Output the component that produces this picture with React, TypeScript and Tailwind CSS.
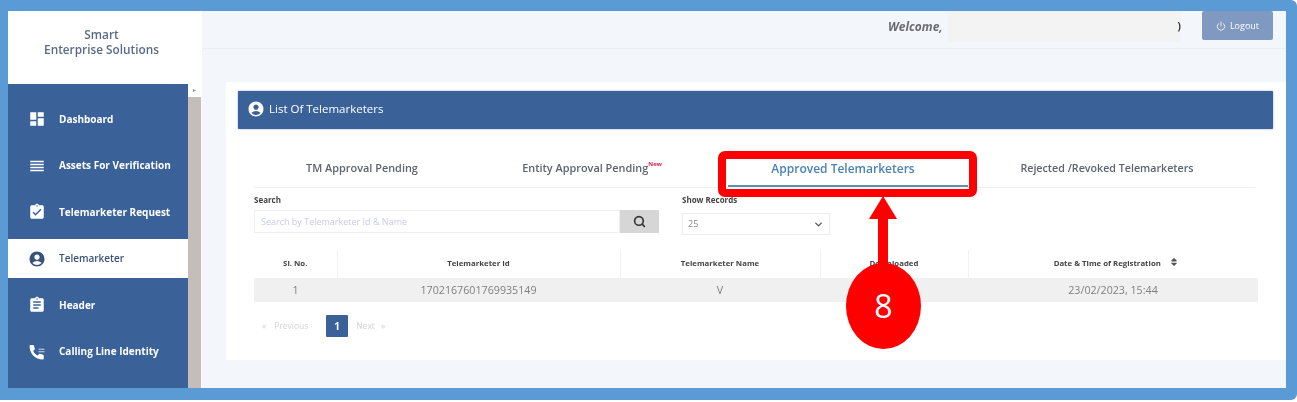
import { Power, Search, ChevronDown } from 'lucide-react'
import { FaSort } from 'react-icons/fa'
import {
  MdDashboard,
  MdReorder,
  MdAssignmentTurnedIn,
  MdAccountCircle,
  MdAssignment,
} from 'react-icons/md'

function CallingIcon({ className }: { className?: string }) {
  return (
    <svg className={className} viewBox="0 0 24 24" fill="currentColor">
      <path d="M6.6 2.5c.6 0 1 .3 1.2.9l1.3 3.9c.2.5 0 1-.3 1.4L6.900 10.500c1.300 2.600 3.500 4.800 6.100 6.100l1.800-1.900c.4-.4.900-.5 1.400-.3l3.900 1.300c.6.200.9.600.9 1.200v3.600c0 .8-.6 1.400-1.400 1.400C9.800 21.900 2.100 14.200 2.100 3.900c0-.8.600-1.400 1.400-1.400z" />
      <path d="M14 7.500h8v1.400h-8zM14 11h8v1.400h-8z" opacity="0.75" />
    </svg>
  )
}

const navItems = [
  { label: 'Dashboard', icon: MdDashboard },
  { label: 'Assets For Verification', icon: MdReorder },
  { label: 'Telemarketer Request', icon: MdAssignmentTurnedIn },
  { label: 'Telemarketer', icon: MdAccountCircle, active: true },
  { label: 'Header', icon: MdAssignment },
  { label: 'Calling Line Identity', icon: CallingIcon },
]

function Sidebar() {
  return (
    <aside className="flex w-[194px] shrink-0 flex-col bg-white">
      <div className="flex h-[73px] shrink-0 flex-col pt-[16px] pr-[7px] text-center text-[11.8px] leading-[15px] font-semibold text-[#5a6b85]">
        <span>Smart</span>
        <span>Enterprise Solutions</span>
      </div>
      <div className="flex min-h-0 flex-1">
        <nav className="flex w-[180px] flex-col bg-[#3a6298] pt-[12px]">
          {navItems.map((item) => (
            <div key={item.label} className="flex h-[46.5px] shrink-0 items-center">
              <a
                className={`flex h-[39px] w-full items-center gap-[13px] pl-[20px] text-[10px] font-bold ${
                  item.active ? 'bg-white pl-[20px] font-semibold text-[#3a5278]' : 'text-white'
                }`}
              >
                <item.icon className="h-[18px] w-[18px] shrink-0" />
                <span>{item.label}</span>
              </a>
            </div>
          ))}
        </nav>
        <div className="flex w-[13px] flex-col">
          <div className="flex h-[13px] items-center justify-center text-[6px] text-[#999]">▸</div>
          <div className="flex-1 bg-[#c4bdb9]" />
        </div>
      </div>
    </aside>
  )
}

function TopBar() {
  return (
    <header className="flex h-[38px] shrink-0 items-start border-b border-[#e9eef3]">
      <div className="ml-[686px] flex h-[31px] w-[60px] items-center text-[12px] font-bold whitespace-nowrap text-[#6b6b73] italic">
        Welcome,
      </div>
      <div className="flex h-[31px] w-[233px] items-center justify-end bg-[#f3f3f3] text-[10px] font-bold text-[#333]">
        )
      </div>
      <button className="ml-[21px] flex h-[29px] w-[71px] items-center justify-center gap-1 rounded-[2px] bg-[#7f99c0] text-[9px] text-white">
        <Power className="h-[10px] w-[10px]" />
        Logout
      </button>
    </header>
  )
}

function Tabs() {
  return (
    <div className="grid w-[1001px] grid-cols-[216px_244px_258px_283px] border-b border-[#eef0f2] text-center text-[10.9px] font-semibold text-[#5b6470]">
      <div className="flex h-[37px] items-center justify-center">TM Approval Pending</div>
      <div className="flex h-[37px] items-center justify-center">
        Entity Approval Pending
        <sup className="-mt-[3px] text-[6px] font-bold text-[#e8194b]">New</sup>
      </div>
      <div className="mr-[4px] ml-[14px] flex h-[37px] items-center justify-center border-b-2 border-[#5f8fb5] pt-[2px] pr-[10px] text-[12px] whitespace-nowrap text-[#4a83b5]">
        Approved Telemarketers
      </div>
      <div className="flex h-[37px] items-center justify-center pr-[13px] text-[10.7px]">Rejected /Revoked Telemarketers</div>
    </div>
  )
}

function Filters() {
  return (
    <div className="mt-[7px] flex items-start">
      <div className="w-[405px]">
        <label className="block text-[8px] leading-[10px] font-bold text-[#444]">Search</label>
        <div className="mt-[5px] flex h-[23px]">
          <input
            readOnly
            placeholder="Search by Telemarketer Id & Name"
            className="h-full w-[366px] border border-[#f0f0f4] pl-[6px] text-[9px] outline-none placeholder:text-[#c9c9ee]"
          />
          <button className="flex w-[39px] items-center justify-center bg-[#d6d6d6] text-[#333]">
            <Search className="h-[13px] w-[13px]" strokeWidth={3} />
          </button>
        </div>
      </div>
      <div className="ml-[23px]">
        <label className="block text-[8px] leading-[10px] font-bold text-[#444]">Show Records</label>
        <div className="mt-[8px] flex h-[22px] w-[148px] items-center justify-between border border-[#eeeeee] px-[5px] text-[9px] text-[#888]">
          <span>25</span>
          <ChevronDown className="h-[11px] w-[11px] text-[#555]" strokeWidth={3} />
        </div>
      </div>
    </div>
  )
}

function RecordsTable() {
  return (
    <table className="mt-[15px] w-[1004px] table-fixed border-collapse text-center">
      <colgroup>
        <col className="w-[83px]" />
        <col className="w-[283px]" />
        <col className="w-[200px]" />
        <col className="w-[148px]" />
        <col className="w-[290px]" />
      </colgroup>
      <thead>
        <tr className="h-[28px] text-[7.8px] font-bold text-[#444]">
          <th className="border-r border-[#f2f2f2]">Sl. No.</th>
          <th className="border-r border-[#f2f2f2]">Telemarketer Id</th>
          <th className="border-r border-[#f2f2f2]">Telemarketer Name</th>
          <th className="border-r border-[#f2f2f2]">Downloaded</th>
          <th>
            <span className="inline-flex items-center gap-[8px] pl-[6px]">
              Date &amp; Time of Registration
              <FaSort className="mb-[5px] h-[10px] w-[10px] text-[#555]" />
            </span>
          </th>
        </tr>
      </thead>
      <tbody>
        <tr className="h-[24px] bg-[#f0f0f0] text-[10.7px] text-[#7f7f7f]">
          <td>1</td>
          <td>1702167601769935149</td>
          <td>V</td>
          <td />
          <td>23/02/2023, 15:44</td>
        </tr>
      </tbody>
    </table>
  )
}

function Pagination() {
  return (
    <div className="mt-[13px] flex h-[22px] items-center pl-[8px] text-[8.5px] text-[#d2d2d2]">
      <span>«</span>
      <span className="ml-[8px] w-[52px]">Previous</span>
      <span className="flex h-[22px] w-[22px] items-center justify-center rounded-[1px] bg-[#3a6298] text-[10px] font-bold text-white">
        1
      </span>
      <span className="ml-[8px]">Next</span>
      <span className="ml-[6px]">»</span>
    </div>
  )
}

function Callout() {
  return (
    <>
      <div className="absolute top-[151px] left-[718px] h-[46px] w-[259px] rounded-[7px] border-[8px] border-[#ff0000]" />
      <svg className="absolute top-[195px] left-[868px]" width="30" height="72" viewBox="0 0 30 72">
        <path d="M15 1 L29 24 L20 24 L20 72 L10 72 L10 24 L1 24 Z" fill="#ff0000" />
      </svg>
      <div className="absolute top-[263px] left-[846px] flex h-[86px] w-[75px] items-center justify-center rounded-[50%] bg-[#ff0000] font-['Open_Sans',sans-serif] text-[32px] text-white">
        8
      </div>
    </>
  )
}

export default function App() {
  return (
    <div className="relative h-[402px] w-[1297px] overflow-hidden bg-white font-['Open_Sans',sans-serif]">
      <div className="h-[400px] rounded-tr-[6px] rounded-br-[6px] bg-[#5b9bd5] pt-[11px] pr-[11px] pb-[12px] pl-[8px]">
        <div className="flex h-full overflow-hidden bg-[#f3f7fb] blur-[0.6px]">
          <Sidebar />
          <main className="flex min-w-0 flex-1 flex-col">
            <TopBar />
            <section className="mt-[33px] ml-[24px] h-[278px] bg-white pt-[9px] pr-[13px] pl-[12px]">
              <div className="flex h-[38px] items-center gap-[4px] rounded-[1px] bg-[#3a6298] pb-[2px] pl-[9px] text-[11.5px] text-white shadow-[0_0_2px_#7b98c0]">
                <MdAccountCircle className="h-[18px] w-[18px]" />
                List Of Telemarketers
              </div>
              <div className="mt-[21px] pl-[16px]">
                <Tabs />
                <Filters />
                <RecordsTable />
                <Pagination />
              </div>
            </section>
          </main>
        </div>
      </div>
      <Callout />
    </div>
  )
}
